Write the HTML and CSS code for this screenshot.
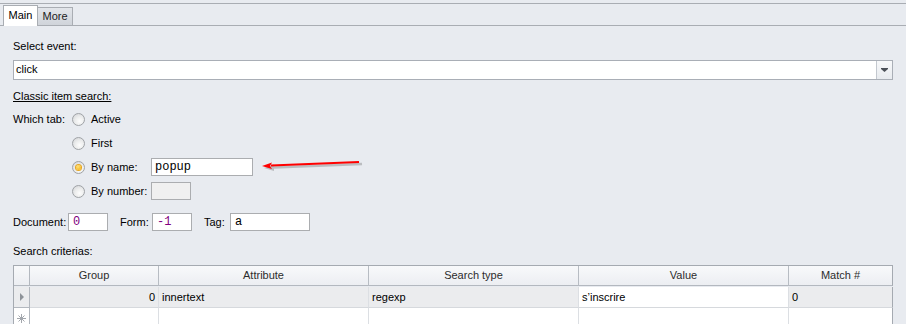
FILE: index.html
```html
<!DOCTYPE html>
<html lang="en">
  <head>
    <meta charset="UTF-8" />
    <title>Event settings</title>
    <link rel="stylesheet" href="styles.css">
  </head>

  <body>
    <!-- Tabs -->
    <div class="tabbar">
      <div class="tab active">Main</div>
      <div class="tab">More</div>
    </div>

    <div class="panel">
      <div class="line">Select event:</div>
      <div class="combo">
        <span class="combo-value">click</span>
        <span class="combo-drop">
          <svg width="7" height="4" viewBox="0 0 7 4"><rect x="0" y="0" width="7" height="1" fill="#4b5058"/><polygon points="0,1 7,1 3.5,4" fill="#4b5058"/></svg>
        </span>
      </div>

      <div class="line section-title">Classic item search:</div>

      <!-- Which tab -->
      <div class="which">
        <span class="which-label">Which tab:</span>
        <label class="option"><span class="radio"></span>Active</label>
        <span></span>

        <span></span>
        <label class="option"><span class="radio"></span>First</label>
        <span></span>

        <span></span>
        <label class="option"><span class="radio on"></span>By name:</label>
        <span class="field mono wide">popup</span>

        <span></span>
        <label class="option"><span class="radio"></span>By number:</label>
        <span class="field disabled"></span>
      </div>

      <div class="fields">
        <span class="field-label doc">Document:</span>
        <span class="field mono num">0</span>
        <span class="field-label form">Form:</span>
        <span class="field mono num">-1</span>
        <span class="field-label tag">Tag:</span>
        <span class="field mono tagbox">a</span>
      </div>

      <div class="line criteria">Search criterias:</div>

      <!-- Grid -->
      <div class="grid">
        <div class="head rowhead"></div>
        <div class="head">Group</div>
        <div class="head">Attribute</div>
        <div class="head">Search type</div>
        <div class="head">Value</div>
        <div class="head">Match #</div>

        <div class="cell rowhead current"><span class="pointer"></span></div>
        <div class="cell current right">0</div>
        <div class="cell current">innertext</div>
        <div class="cell current">regexp</div>
        <div class="cell">s’inscrire</div>
        <div class="cell current">0</div>

        <div class="cell rowhead">
          <svg width="9" height="9" viewBox="0 0 9 9"><g stroke="#a3a7ad" stroke-width="1"><line x1="4.5" y1="0" x2="4.5" y2="9"/><line x1="0" y1="4.5" x2="9" y2="4.5"/><line x1="1.5" y1="1.5" x2="7.5" y2="7.5"/><line x1="7.5" y1="1.5" x2="1.5" y2="7.5"/></g></svg>
        </div>
        <div class="cell"></div>
        <div class="cell"></div>
        <div class="cell"></div>
        <div class="cell"></div>
        <div class="cell"></div>
      </div>
    </div>

    <!-- red annotation arrow over the form -->
    <svg class="arrow" width="115" height="20" viewBox="0 0 115 20">
      <g opacity="0.3" fill="#555" stroke="#555">
        <line x1="19" y1="12.5" x2="107" y2="9" stroke-width="2.5"/>
        <polygon points="9,13 19,9.5 19,16" stroke="none"/>
      </g>
      <g fill="#f00" stroke="#f00">
        <line x1="16" y1="10.5" x2="104" y2="7" stroke-width="2"/>
        <polygon points="7,11 17,7.5 15,11 17,14" stroke="none"/>
      </g>
    </svg>
  </body>
</html>
```

FILE: styles.css
```css
* {
  box-sizing: border-box;
}

body {
  margin: 0;
  height: 324px;
  overflow: hidden;
  position: relative;
  background-color: #e8ebf0;
  font-family: "Liberation Sans", Arial, sans-serif;
  font-size: 11px;
  color: #000;
}

/* tabs */
.tabbar {
  display: flex;
  align-items: flex-end;
  margin-top: 3px;
  height: 23px;
  padding-left: 3px;
  border-top: 1px solid #a9adb3;
  border-bottom: 1px solid #a9adb3;
}

.tab {
  width: 36px;
  height: 18px;
  line-height: 16px;
  text-align: center;
  border: 1px solid #a9adb3;
  border-bottom: none;
  background: linear-gradient(#e2e5ea, #d0d4da);
  color: #222;
}

.tab.active {
  width: 35px;
  height: 21px;
  line-height: 18px;
  margin-bottom: -1px;
  margin-right: -1px;
  background-color: #fff;
  background-image: none;
  position: relative;
  color: #000;
}

/* main panel */
.panel {
  padding: 13px 13px 0 13px;
}

.line {
  line-height: 14px;
  height: 14px;
}

.combo {
  display: flex;
  height: 20px;
  margin-top: 7px;
  border: 1px solid #a9aeb6;
  background-color: #fff;
}

.combo-value {
  flex: 1;
  padding-left: 2px;
  line-height: 17px;
}

.combo-drop {
  width: 16px;
  display: flex;
  align-items: center;
  justify-content: center;
  border-left: 1px solid #c3c8cf;
  background: linear-gradient(#f7f8fa, #e8ebef);
}

.section-title {
  margin-top: 9px;
  text-decoration: underline;
}

.which {
  display: grid;
  grid-template-columns: 59px 79px 1fr;
  grid-auto-rows: 18px;
  row-gap: 6px;
  margin-top: 7px;
  align-items: center;
}

.option {
  display: flex;
  align-items: center;
  gap: 6px;
}

.radio {
  width: 13px;
  height: 13px;
  border-radius: 50%;
  border: 1px solid #9fa2a6;
  background: radial-gradient(circle at 60% 65%, #fdfdfd 0, #eceded 45%, #cfd1d4 100%);
  display: flex;
  align-items: center;
  justify-content: center;
}

.radio.on::after {
  content: "";
  width: 5px;
  height: 5px;
  border-radius: 50%;
  background: radial-gradient(circle at 40% 35%, #ffe37a, #f2a700);
  box-shadow: 0 0 0 1px #e5a520;
}

.field {
  display: block;
  height: 18px;
  border: 1px solid #abadb0;
  background-color: #fff;
  line-height: 16px;
  padding-left: 3px;
}

.mono {
  font-family: "Liberation Mono", "Courier New", monospace;
  font-size: 12px;
}

.wide {
  width: 102px;
}

.disabled {
  width: 40px;
  background-color: #f0f0f0;
}

.fields {
  display: flex;
  align-items: center;
  height: 18px;
  margin-top: 13px;
}

.field-label.doc {
  width: 55px;
}

.field-label.form {
  width: 32px;
  margin-left: 12px;
}

.field-label.tag {
  width: 26px;
  margin-left: 12px;
}

.num {
  width: 40px;
  padding-left: 4px;
  color: #800080;
}

.tagbox {
  width: 80px;
  padding-left: 4px;
}

.criteria {
  margin-top: 13px;
}

/* search grid */
.grid {
  display: grid;
  grid-template-columns: 16px 129px 210px 210px 210px 104px;
  grid-auto-rows: 21px;
  width: 880px;
  margin-top: 7px;
  border-top: 1px solid #a5aab1;
  border-left: 1px solid #a5aab1;
}

.head {
  height: 20px;
  line-height: 19px;
  text-align: center;
  color: #2c2c2c;
  background: linear-gradient(#f8f9fb, #eceef2);
  border-right: 1px solid #b7bcc3;
  border-bottom: 1px solid #b3b8bf;
}

.grid .head:last-child,
.grid .head:nth-child(6) {
  border-right-color: #a5aab1;
}

.cell {
  line-height: 20px;
  padding: 0 3px;
  background-color: #fff;
  border-right: 1px solid #dcdfe3;
  border-bottom: 1px solid #d6d9dd;
  white-space: nowrap;
}

.grid .cell:nth-child(6n) {
  border-right-color: #a5aab1;
}

.cell.current {
  background-color: #ebecee;
}

.cell.right {
  text-align: right;
}

.rowhead {
  display: flex;
  align-items: center;
  justify-content: center;
  padding: 0;
  border-right: 1px solid #b3b8bf;
}

.cell.rowhead {
  border-bottom-color: #b3b8bf;
}

.pointer {
  width: 0;
  height: 0;
  border-top: 4px solid transparent;
  border-bottom: 4px solid transparent;
  border-left: 4px solid #8e9399;
}

.arrow {
  position: absolute;
  left: 255px;
  top: 155px;
}
```
